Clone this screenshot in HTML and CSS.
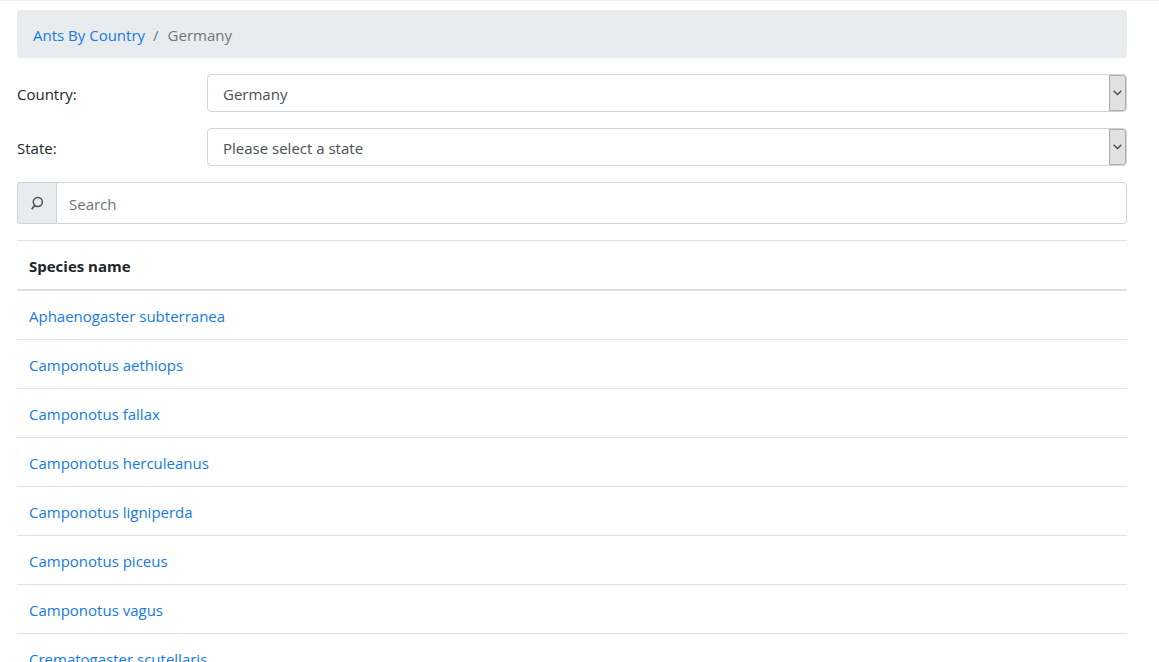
FILE: index.html
```html
<!DOCTYPE html>
<html lang="en">
<head>
<meta charset="utf-8">
<meta name="viewport" content="width=device-width, initial-scale=1">
<title>Ants By Country – Germany</title>
<link rel="stylesheet" href="styles.css">
</head>
<body>
<main class="page">
  <nav aria-label="breadcrumb">
    <ol class="breadcrumb">
      <li><a href="#">Ants By Country</a></li>
      <li class="active" aria-current="page">Germany</li>
    </ol>
  </nav>
  <form class="filters">
    <div class="form-row">
      <label for="country">Country:</label>
      <div class="select-wrap">
        <select id="country"><option>Germany</option></select>
        <span class="arrow"><svg viewBox="0 0 9 6" width="9" height="6" aria-hidden="true"><path d="M0.7 0.7 L4.5 4.5 L8.3 0.7" fill="none" stroke="#444" stroke-width="1.3"/></svg></span>
      </div>
    </div>
    <div class="form-row">
      <label for="state">State:</label>
      <div class="select-wrap">
        <select id="state"><option>Please select a state</option></select>
        <span class="arrow"><svg viewBox="0 0 9 6" width="9" height="6" aria-hidden="true"><path d="M0.7 0.7 L4.5 4.5 L8.3 0.7" fill="none" stroke="#444" stroke-width="1.3"/></svg></span>
      </div>
    </div>
    <div class="search-group">
      <label class="search-icon" for="search" aria-label="Search"><svg viewBox="0 0 14 16" width="14" height="16" aria-hidden="true"><circle cx="7.8" cy="7" r="4.5" fill="none" stroke="#495057" stroke-width="1.5"/><path d="M4.8 10.2 L1.7 14.2" stroke="#495057" stroke-width="1.8"/></svg></label>
      <input id="search" type="text" placeholder="Search">
    </div>
  </form>
  <table class="species">
    <thead><tr><th scope="col">Species name</th></tr></thead>
    <tbody>
      <tr><td><a href="#">Aphaenogaster subterranea</a></td></tr>
      <tr><td><a href="#">Camponotus aethiops</a></td></tr>
      <tr><td><a href="#">Camponotus fallax</a></td></tr>
      <tr><td><a href="#">Camponotus herculeanus</a></td></tr>
      <tr><td><a href="#">Camponotus ligniperda</a></td></tr>
      <tr><td><a href="#">Camponotus piceus</a></td></tr>
      <tr><td><a href="#">Camponotus vagus</a></td></tr>
      <tr><td><a href="#">Crematogaster scutellaris</a></td></tr>
    </tbody>
  </table>
</main>
</body>
</html>
```
FILE: styles.css
```css
*, *::before, *::after { box-sizing: border-box; }
html { scrollbar-width: none; }
body {
  margin: 0;
  color: #212529;
  background: #fff;
  font: 15px/24px "Segoe UI", "Open Sans", "Noto Sans", sans-serif;
}
a { color: #1679e4; text-decoration: none; }
.page { padding: 9px 32px 0 17px; border-top: 1px solid #f2f3f4; }
.breadcrumb {
  display: flex;
  margin: 0 0 16px;
  padding: 13px 16px 11px;
  list-style: none;
  background: #e9ecef;
  border-radius: 4px;
}
.active { color: #6c757d; }
.active::before { content: "/"; padding: 0 9px 0 8px; }
.form-row {
  display: grid;
  grid-template-columns: 190px 1fr;
  align-items: center;
  margin-bottom: 16px;
}
.form-row label { padding-top: 2px; }
.select-wrap { position: relative; }
select, input { font: inherit; color: #495057; background: #fff; border: 1px solid #ced4da; }
select {
  display: block;
  appearance: none;
  width: 100%;
  height: 38px;
  padding: 7px 32px 5px 15px;
  border-radius: 4px;
}
.arrow {
  position: absolute;
  top: 1px;
  right: 1px;
  bottom: 1px;
  width: 17px;
  display: grid;
  place-items: center;
  background: #e1e1e1;
  border: 1px solid #adadad;
  border-radius: 0 3px 3px 0;
  pointer-events: none;
}
.search-group { display: flex; height: 42px; margin-bottom: 16px; }
.search-icon {
  display: grid;
  place-items: center;
  width: 39px;
  background: #e9ecef;
  border: 1px solid #ced4da;
  border-right: 0;
  border-radius: 4px 0 0 4px;
}
input { flex: 1; min-width: 0; padding: 7px 12px 5px; border-radius: 0 4px 4px 0; }
input::placeholder { color: #6c757d; opacity: 1; }
.species { width: 100%; border-collapse: collapse; }
.species th, .species td { padding: 13px 12px 11px; text-align: left; border-top: 1px solid #dee2e6; }
.species th { border-bottom: 2px solid #dee2e6; }
```
